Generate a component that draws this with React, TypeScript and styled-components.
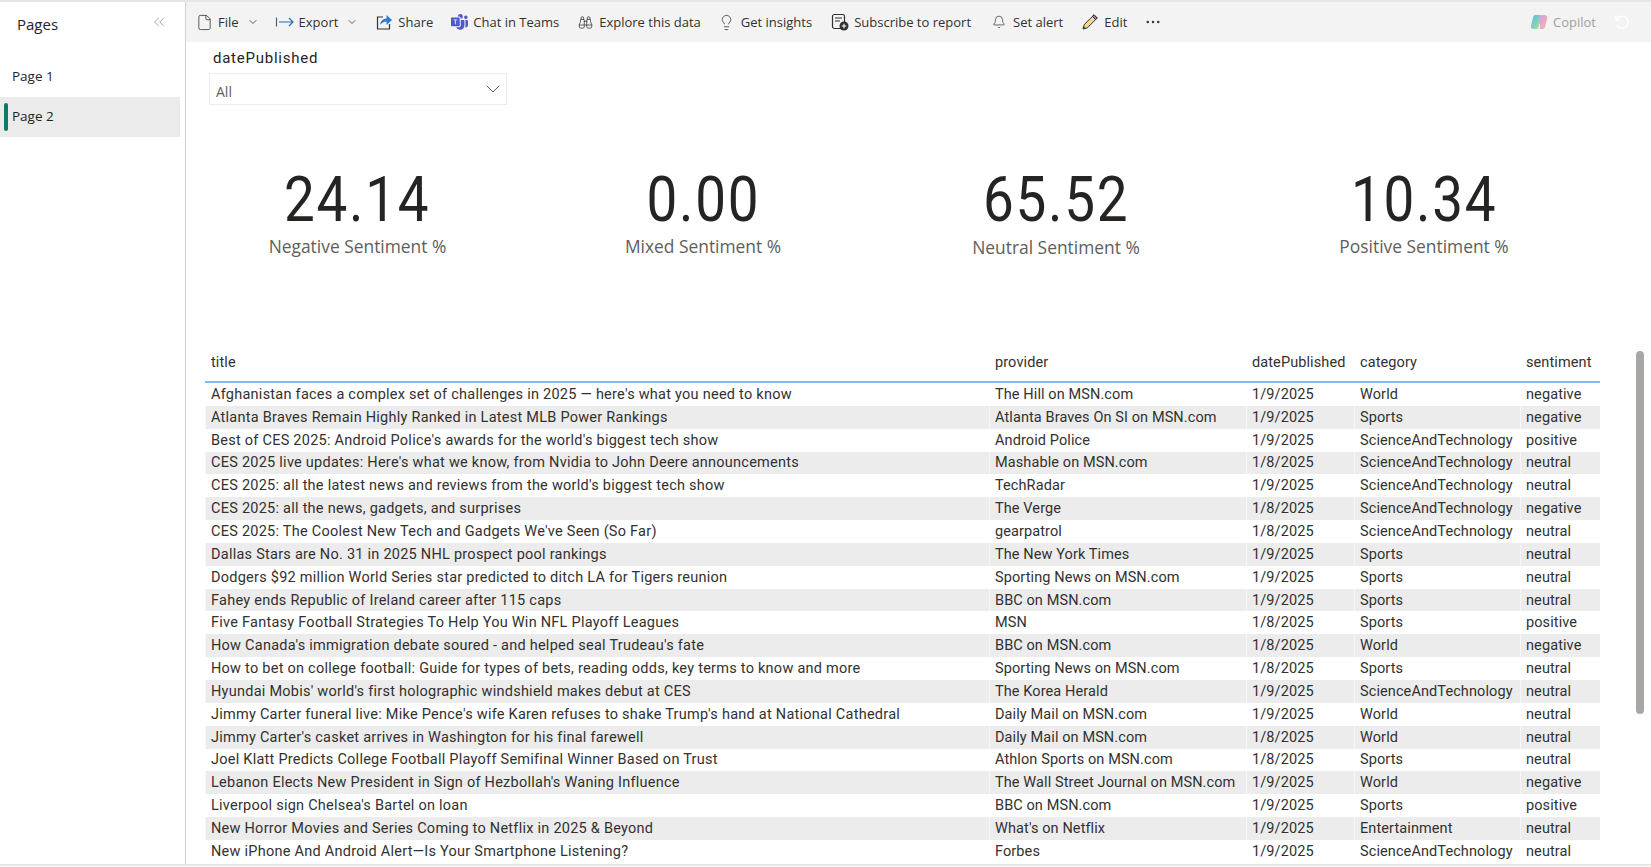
import styled, { createGlobalStyle } from "styled-components";
import { ChevronDown, ChevronsLeft, File, Binoculars, Lightbulb, Bell, Ellipsis } from "lucide-react";
import { BsMicrosoftTeams } from "react-icons/bs";

const GlobalStyle = createGlobalStyle`
  html, body {
    margin: 0;
    padding: 0;
    background: #fff;
    font-family: "Open Sans", "Noto Sans", sans-serif;
    color: #252423;
  }
  * { box-sizing: border-box; }
`;

const Page = styled.div`
  width: 1651px;
  height: 867px;
  overflow: hidden;
  display: flex;
  border-top: 2px solid #e6e6e6;
  position: relative;
`;

const Sidebar = styled.aside`
  width: 186px;
  flex: none;
  border-right: 1px solid #d2d0ce;
  padding-top: 11px;
`;

const SidebarHead = styled.div`
  display: flex;
  justify-content: space-between;
  align-items: center;
  padding: 0 17px 0 17px;
  height: 22px;
  font-size: 15px;
  font-weight: 500;
  margin-bottom: 22px;

  svg { color: #8a8886; margin-top: -4px; }
`;

const PageTab = styled.div<{ $active?: boolean }>`
  width: 180px;
  height: 40px;
  display: flex;
  align-items: center;
  padding: 0 0 2px 12px;
  font-size: 13.5px;
  position: relative;
  background: ${({ $active }) => ($active ? "#ebebeb" : "transparent")};
  font-weight: ${({ $active }) => ($active ? 500 : 400)};

  ${({ $active }) =>
    $active &&
    `&::before {
      content: "";
      position: absolute;
      left: 4px;
      top: 6px;
      bottom: 6px;
      width: 4px;
      border-radius: 2px;
      background: #117865;
    }`}
`;

const Content = styled.main`
  flex: 1;
  min-width: 0;
  display: flex;
  flex-direction: column;
`;

const Toolbar = styled.div`
  height: 40px;
  flex: none;
  background: #f3f3f3;
  display: flex;
  align-items: center;
  padding: 0 19px 0 8px;
`;

const ToolItem = styled.div<{ $muted?: boolean; $extra?: number }>`
  display: flex;
  align-items: center;
  gap: 4px;
  margin-right: ${({ $extra }) => 16 + ($extra ?? 0)}px;
  font-size: 13px;
  white-space: nowrap;
  color: ${({ $muted }) => ($muted ? "#a19f9d" : "#323130")};
`;

const IconSlot = styled.span`
  width: 20px;
  height: 20px;
  display: flex;
  align-items: center;
  justify-content: center;
  flex: none;
`;

const Chevron = styled(ChevronDown)`
  color: #605e5c;
  margin-left: 4px;
`;

const Spacer = styled.div`
  flex: 1;
`;

const Slicer = styled.section`
  padding: 7px 0 0 27px;
  height: 96px;
`;

const SlicerLabel = styled.div`
  font-family: Roboto, sans-serif;
  font-size: 15px;
  font-weight: 400;
  line-height: 18px;
  letter-spacing: 0.75px;
`;

const SlicerBox = styled.div`
  width: 298px;
  height: 32px;
  margin: 6px 0 0 -4px;
  border: 1px solid #ececec;
  display: flex;
  align-items: center;
  justify-content: space-between;
  padding: 4px 1px 0 6px;
  font-size: 14px;
  color: #605e5c;

  svg { margin-top: -4px; }
`;

const KpiRow = styled.section`
  display: grid;
  grid-template-columns: 343px 348px 358px 378px;
  height: 142px;
`;

const KpiCard = styled.div`
  display: flex;
  flex-direction: column;
  align-items: center;
  padding-top: 32px;
`;

const KpiValue = styled.div`
  font-family: Roboto, sans-serif;
  font-size: 63px;
  font-weight: 450;
  line-height: 60px;
  color: #252423;
  transform: scaleX(0.87);
  letter-spacing: 2px;
`;

const KpiLabel = styled.div<{ $shift?: number }>`
  font-size: 17.4px;
  line-height: 24px;
  margin-top: ${({ $shift }) => 4 + ($shift ?? 0)}px;
  color: #605e5c;
`;

const TableWrap = styled.section`
  margin: 64px 0 0 19px;
  width: 1395px;
  font-family: Roboto, sans-serif;
  font-size: 14.5px;
  color: #323130;
`;

const COLUMNS = "784px 257px 108px 166px 80px";

const HeaderRow = styled.div`
  display: grid;
  grid-template-columns: ${COLUMNS};
  height: 39px;
  align-items: center;
  border-bottom: 2px solid #83bcf3;
  padding-bottom: 1px;
`;

const BodyRow = styled.div<{ $stripe: boolean }>`
  display: grid;
  grid-template-columns: ${COLUMNS};
  height: 22.85px;
  align-items: center;
  background: ${({ $stripe }) => ($stripe ? "#ececec" : "#fff")};
`;

const Cell = styled.div<{ $spread?: boolean }>`
  padding-left: 5px;
  white-space: nowrap;
  overflow: hidden;
  height: 100%;
  display: flex;
  align-items: center;
  border-left: 1px solid rgba(255, 255, 255, 0.6);
  letter-spacing: ${({ $spread }) => ($spread ? "0.25px" : "0.1px")};
`;

const Scrollbar = styled.div`
  position: absolute;
  left: 1636px;
  top: 349px;
  width: 8px;
  height: 363px;
  border-radius: 4px;
  background: #a9a7a5;
`;

const BottomLine = styled.div`
  position: absolute;
  left: 0;
  right: 0;
  bottom: 0;
  height: 3px;
  background: #f3f3f3;
  border-top: 1px solid #e1e1e1;
`;

const ExportIcon = () => (
  <svg width="20" height="14" viewBox="0 0 20 14" fill="none" stroke="#605e5c" strokeWidth="1.2">
    <path d="M1.5 2.5v9" />
    <path d="M4 7h14M14 3l4 4-4 4" stroke="#1f6fc4" />
  </svg>
);

const ShareIcon = () => (
  <svg width="18" height="18" viewBox="0 0 18 18" fill="none">
    <path d="M8 4H2.5v12h12v-5" stroke="#323130" strokeWidth="1.2" />
    <path d="M5 12c.6-4 3-6.3 6.5-6.5V2L17 7l-5.5 5V8.6C9 8.6 6.8 9.8 5 12z" fill="#2b7cd3" />
  </svg>
);

const SubscribeIcon = () => (
  <svg width="18" height="18" viewBox="0 0 18 18" fill="none">
    <rect x="1.5" y="1.5" width="12" height="14" rx="2" stroke="#323130" strokeWidth="1.2" />
    <path d="M4 5h7M4 8h5" stroke="#323130" strokeWidth="1.2" />
    <circle cx="13" cy="13" r="4.5" fill="#323130" />
    <path d="M13 10.7v4.6M10.7 13h4.6" stroke="#fff" strokeWidth="1.1" />
  </svg>
);

const PencilIcon = () => (
  <svg width="18" height="18" viewBox="0 0 18 18" fill="none">
    <path d="M2 16l1.2-4.4L13 1.8l3.2 3.2-9.8 9.8z" fill="#f5d78a" stroke="#323130" strokeWidth="1" />
    <path d="M13 1.8l3.2 3.2-1.6 1.6-3.2-3.2z" fill="#a678c9" stroke="#323130" strokeWidth="1" />
    <path d="M2 16l.7-2.6 1.9 1.9z" fill="#323130" />
  </svg>
);

const CopilotIcon = () => (
  <svg width="18" height="18" viewBox="0 0 18 18">
    <defs>
      <linearGradient id="cpA" x1="0" y1="0" x2="1" y2="1">
        <stop offset="0" stopColor="#56b8ea" />
        <stop offset="1" stopColor="#b6e58e" />
      </linearGradient>
      <linearGradient id="cpB" x1="0" y1="0" x2="1" y2="1">
        <stop offset="0" stopColor="#d39cf2" />
        <stop offset="1" stopColor="#fbb49a" />
      </linearGradient>
    </defs>
    <path d="M5 2h5c1.4 0 2 1 1.6 2L8.5 14.4C8 15.6 7 16 6 16H3.6C1.4 16 .4 14 1 12.4L3.2 4C3.5 2.8 4 2 5 2z" fill="url(#cpA)" />
    <path d="M9.5 4.5C10 3 11 2 12.6 2h1.8c2.2 0 3.3 2 2.8 3.6L15 14c-.4 1.2-1.2 2-2.6 2H8.2c1 0 1.6-.6 1.8-1.6z" fill="url(#cpB)" />
  </svg>
);

const UndoIcon = () => (
  <svg width="16" height="16" viewBox="0 0 16 16" fill="none" stroke="#fff" strokeWidth="1.4">
    <path d="M2 2v4h4" />
    <path d="M2.4 6A6 6 0 1 1 3 11.5" />
  </svg>
);

const ROWS = [
  ["Afghanistan faces a complex set of challenges in 2025 — here's what you need to know", "The Hill on MSN.com", "1/9/2025", "World", "negative"],
  ["Atlanta Braves Remain Highly Ranked in Latest MLB Power Rankings", "Atlanta Braves On SI on MSN.com", "1/9/2025", "Sports", "negative"],
  ["Best of CES 2025: Android Police's awards for the world's biggest tech show", "Android Police", "1/9/2025", "ScienceAndTechnology", "positive"],
  ["CES 2025 live updates: Here's what we know, from Nvidia to John Deere announcements", "Mashable on MSN.com", "1/8/2025", "ScienceAndTechnology", "neutral"],
  ["CES 2025: all the latest news and reviews from the world's biggest tech show", "TechRadar", "1/9/2025", "ScienceAndTechnology", "neutral"],
  ["CES 2025: all the news, gadgets, and surprises", "The Verge", "1/8/2025", "ScienceAndTechnology", "negative"],
  ["CES 2025: The Coolest New Tech and Gadgets We've Seen (So Far)", "gearpatrol", "1/8/2025", "ScienceAndTechnology", "neutral"],
  ["Dallas Stars are No. 31 in 2025 NHL prospect pool rankings", "The New York Times", "1/9/2025", "Sports", "neutral"],
  ["Dodgers $92 million World Series star predicted to ditch LA for Tigers reunion", "Sporting News on MSN.com", "1/9/2025", "Sports", "neutral"],
  ["Fahey ends Republic of Ireland career after 115 caps", "BBC on MSN.com", "1/9/2025", "Sports", "neutral"],
  ["Five Fantasy Football Strategies To Help You Win NFL Playoff Leagues", "MSN", "1/8/2025", "Sports", "positive"],
  ["How Canada's immigration debate soured - and helped seal Trudeau's fate", "BBC on MSN.com", "1/8/2025", "World", "negative"],
  ["How to bet on college football: Guide for types of bets, reading odds, key terms to know and more", "Sporting News on MSN.com", "1/8/2025", "Sports", "neutral"],
  ["Hyundai Mobis' world's first holographic windshield makes debut at CES", "The Korea Herald", "1/9/2025", "ScienceAndTechnology", "neutral"],
  ["Jimmy Carter funeral live: Mike Pence's wife Karen refuses to shake Trump's hand at National Cathedral", "Daily Mail on MSN.com", "1/9/2025", "World", "neutral"],
  ["Jimmy Carter's casket arrives in Washington for his final farewell", "Daily Mail on MSN.com", "1/8/2025", "World", "neutral"],
  ["Joel Klatt Predicts College Football Playoff Semifinal Winner Based on Trust", "Athlon Sports on MSN.com", "1/8/2025", "Sports", "neutral"],
  ["Lebanon Elects New President in Sign of Hezbollah's Waning Influence", "The Wall Street Journal on MSN.com", "1/9/2025", "World", "negative"],
  ["Liverpool sign Chelsea's Bartel on loan", "BBC on MSN.com", "1/9/2025", "Sports", "positive"],
  ["New Horror Movies and Series Coming to Netflix in 2025 & Beyond", "What's on Netflix", "1/9/2025", "Entertainment", "neutral"],
  ["New iPhone And Android Alert—Is Your Smartphone Listening?", "Forbes", "1/9/2025", "ScienceAndTechnology", "neutral"],
];

const KPIS = [
  { value: "24.14", label: "Negative Sentiment %" },
  { value: "0.00", label: "Mixed Sentiment %" },
  { value: "65.52", label: "Neutral Sentiment %", shift: 1 },
  { value: "10.34", label: "Positive Sentiment %" },
];

export default function App() {
  return (
    <>
      <GlobalStyle />
      <Page>
        <Sidebar>
          <SidebarHead>
            Pages
            <ChevronsLeft size={18} strokeWidth={1} />
          </SidebarHead>
          <PageTab>Page 1</PageTab>
          <PageTab $active>Page 2</PageTab>
        </Sidebar>
        <Content>
          <Toolbar>
            <ToolItem>
              <IconSlot><File size={17} strokeWidth={1.1} /></IconSlot>
              File
              <Chevron size={12} />
            </ToolItem>
            <ToolItem>
              <IconSlot><ExportIcon /></IconSlot>
              Export
              <Chevron size={12} />
            </ToolItem>
            <ToolItem>
              <IconSlot><ShareIcon /></IconSlot>
              Share
            </ToolItem>
            <ToolItem>
              <IconSlot><BsMicrosoftTeams size={17} color="#5059c9" /></IconSlot>
              Chat in Teams
            </ToolItem>
            <ToolItem>
              <IconSlot><Binoculars size={15} strokeWidth={1.2} /></IconSlot>
              Explore this data
            </ToolItem>
            <ToolItem $extra={2}>
              <IconSlot><Lightbulb size={17} strokeWidth={1.1} /></IconSlot>
              Get insights
            </ToolItem>
            <ToolItem $extra={2}>
              <IconSlot><SubscribeIcon /></IconSlot>
              Subscribe to report
            </ToolItem>
            <ToolItem $extra={1}>
              <IconSlot><Bell size={14} strokeWidth={1.2} /></IconSlot>
              Set alert
            </ToolItem>
            <ToolItem>
              <IconSlot><PencilIcon /></IconSlot>
              Edit
            </ToolItem>
            <ToolItem>
              <IconSlot><Ellipsis size={18} strokeWidth={1.4} /></IconSlot>
            </ToolItem>
            <Spacer />
            <ToolItem $muted>
              <IconSlot><CopilotIcon /></IconSlot>
              Copilot
            </ToolItem>
            <IconSlot><UndoIcon /></IconSlot>
          </Toolbar>

          <Slicer>
            <SlicerLabel>datePublished</SlicerLabel>
            <SlicerBox>
              All
              <ChevronDown size={24} strokeWidth={1} color="#605e5c" />
            </SlicerBox>
          </Slicer>

          <KpiRow>
            {KPIS.map((kpi) => (
              <KpiCard key={kpi.label}>
                <KpiValue>{kpi.value}</KpiValue>
                <KpiLabel $shift={kpi.shift}>{kpi.label}</KpiLabel>
              </KpiCard>
            ))}
          </KpiRow>

          <TableWrap>
            <HeaderRow>
              <Cell>title</Cell>
              <Cell>provider</Cell>
              <Cell>datePublished</Cell>
              <Cell>category</Cell>
              <Cell>sentiment</Cell>
            </HeaderRow>
            {ROWS.map((row, index) => (
              <BodyRow key={row[0]} $stripe={index % 2 === 1}>
                {row.map((text, col) => (
                  <Cell key={col} $spread={col === 0}>{text}</Cell>
                ))}
              </BodyRow>
            ))}
          </TableWrap>
        </Content>
        <Scrollbar />
        <BottomLine />
      </Page>
    </>
  );
}
